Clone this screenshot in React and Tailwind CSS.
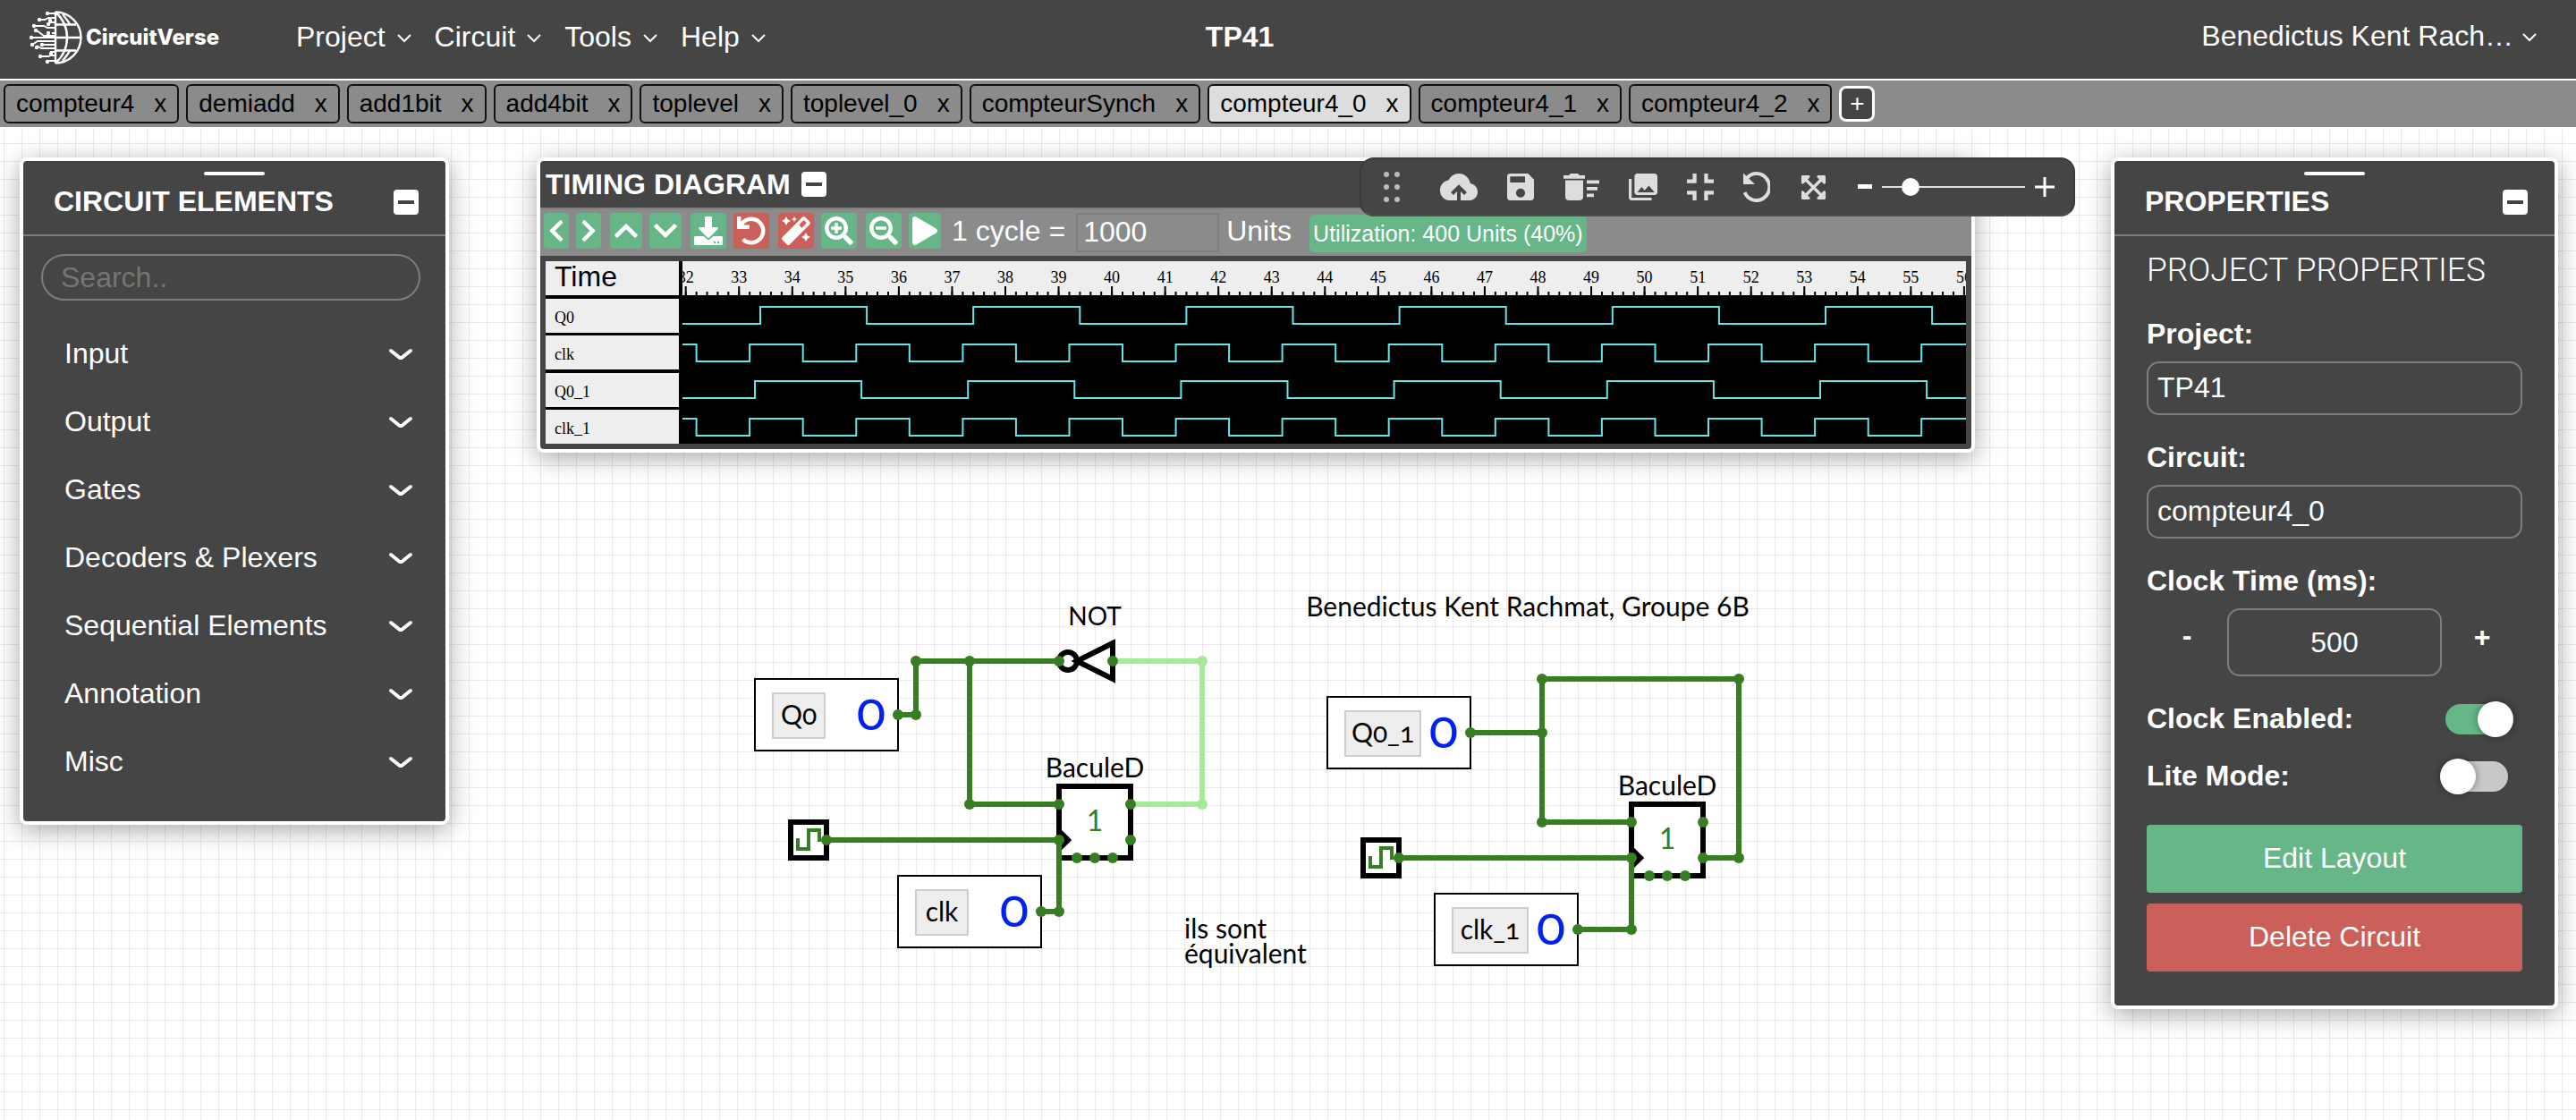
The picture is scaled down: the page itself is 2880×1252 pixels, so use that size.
import React from "react";
import {
  FaChevronDown,
  FaChevronLeft,
  FaChevronRight,
  FaChevronUp,
  FaDownload,
  FaExpandArrowsAlt,
  FaMagic,
  FaPlay,
  FaSearchMinus,
  FaSearchPlus,
  FaUndo,
} from "react-icons/fa";

const WIRE = "#377e22";
const WIRE_HIGH = "#a5ea99";

function NavChevron() {
  return (
    <svg width="16" height="10" viewBox="0 0 16 10" fill="none" stroke="currentColor" strokeWidth="2" aria-hidden="true" className="mt-1">
      <path d="M1 1l7 7 7-7" />
    </svg>
  );
}

function Logo() {
  const node = (x, y) => <circle key={x + "-" + y} cx={x} cy={y} r="2.2" fill="#fff" stroke="none" />;
  return (
    <svg width="60" height="60" viewBox="0 0 60 60" fill="none" stroke="#fff" strokeWidth="2.4" aria-hidden="true">
      <path d="M30 1v58M30 1.5a28.5 28.5 0 010 57M30 1.5c9 8 13 18 13 28.500s-4 20.500-13 28.500M30 15.500h23M30 30h28M30 44.500h23M38 4c4 5 7 9 8 11M38 56c4-5 7-9 8-11.500" />
      <path
        strokeWidth="1.8"
        d="M30 3h-8M30 8h-8l-4 2h-6M30 13h-5l-3 2M30 19h-9l-4-2H6M30 25h-4M30 28H17L9 22M30 30H3M30 34H14l-4 0-6 4M30 38H15M30 42H14l-5-3M30 46h-6M30 50h-5l-3 1h-8M30 56h-8"
      />
      {[[21, 3], [12, 10], [24, 11], [6, 17], [22, 15], [8, 22], [22, 25], [3, 30], [4, 38], [15, 38], [9, 41], [25, 48], [13, 51], [21, 57]].map(([x, y]) => node(x, y))}
    </svg>
  );
}

function MenuItem({ children }) {
  return (
    <button type="button" className="flex items-center gap-[13px]">
      {children}
      <NavChevron />
    </button>
  );
}

function Header() {
  return (
    <header className="grid h-[90px] grid-cols-[46.8%_auto_1fr] items-center border-b-2 border-white bg-[#454545] pb-1.5 text-[32px] leading-9 text-white">
      <div className="flex items-center">
        <a href="#home" className="flex w-[331px] items-center gap-1 pt-0.5 pl-8">
          <Logo />
          <span className="font-[Inter,sans-serif] text-[24px] font-extrabold">CircuitVerse</span>
        </a>
        <nav className="flex gap-[26px]">
          <MenuItem>Project</MenuItem>
          <MenuItem>Circuit</MenuItem>
          <MenuItem>Tools</MenuItem>
          <MenuItem>Help</MenuItem>
        </nav>
      </div>
      <h1 className="font-bold">TP41</h1>
      <div className="flex justify-end pr-11 pb-0.5">
        <button type="button" className="flex items-center gap-2.5">
          Benedictus Kent Rach…
          <NavChevron />
        </button>
      </div>
    </header>
  );
}

const TABS = ["compteur4", "demiadd", "add1bit", "add4bit", "toplevel", "toplevel_0", "compteurSynch", "compteur4_0", "compteur4_1", "compteur4_2"];

function TabBar() {
  return (
    <div className="flex h-[52px] items-center gap-2 bg-[#8b8b8b] px-1 text-[28px] leading-8 text-black">
      {TABS.map((name) => (
        <div
          key={name}
          className={
            "flex h-11 items-center gap-[22px] rounded-md border-2 border-[#111] px-3 " + (name === "compteur4_0" ? "bg-[#dddddd]" : "")
          }
        >
          <button type="button">{name}</button>
          <button type="button" aria-label={"Close " + name}>x</button>
        </div>
      ))}
      <button type="button" aria-label="New circuit" className="flex h-10 w-10 items-center justify-center rounded-lg border-[3px] border-white bg-[#454545] text-white">
        +
      </button>
    </div>
  );
}

function MinusBox() {
  return (
    <button type="button" aria-label="Minimize" className="flex h-7 w-7 items-center justify-center rounded bg-white">
      <span className="h-1 w-[18px] bg-[#454545]" />
    </button>
  );
}

function Panel({ title, className, children }) {
  return (
    <section className={"shrink-0 rounded-lg border-4 border-white bg-[#454545] text-white shadow-[0_6px_28px_rgba(0,0,0,0.35)] " + className}>
      <div className="border-b-2 border-[#7d7d7d] pt-3 pb-1.5">
        <div className="mx-auto h-1 w-[68px] rounded-sm bg-white" />
        <div className="flex h-[60px] items-center justify-between pr-[30px] pl-[34px]">
          <h2 className="pb-0.5 text-[32px] font-bold">{title}</h2>
          <MinusBox />
        </div>
      </div>
      {children}
    </section>
  );
}

const CATEGORIES = ["Input", "Output", "Gates", "Decoders & Plexers", "Sequential Elements", "Annotation", "Misc"];

function CircuitElements() {
  return (
    <Panel title="CIRCUIT ELEMENTS" className="w-[480px]">
      <div className="pt-5 pr-7 pb-[22px] pl-5">
        <input
          type="text"
          aria-label="Search"
          placeholder="Search.."
          className="h-[52px] w-full rounded-full border-2 border-[#7d7d7d] bg-transparent px-5 text-[32px] placeholder:text-[#757575]"
        />
      </div>
      <div className="pb-7">
        {CATEGORIES.map((name) => (
          <button key={name} type="button" className="flex h-[76px] w-full items-center justify-between pr-9 pl-[46px] text-[32px]">
            <span className="pb-0.5">{name}</span>
            <svg width="28" height="14" viewBox="0 0 28 14" fill="none" stroke="#fff" strokeWidth="4" strokeLinecap="round" aria-hidden="true">
              <path d="M3 3l10 8M25 3l-10 8" />
            </svg>
          </button>
        ))}
      </div>
    </Panel>
  );
}

function Switch({ id, defaultChecked }) {
  return (
    <input
      id={id}
      type="checkbox"
      role="switch"
      defaultChecked={defaultChecked}
      className="relative mr-4 h-[34px] w-[70px] appearance-none rounded-full bg-[#c8c8c8] before:absolute before:-top-[3px] before:-left-1.5 before:h-10 before:w-10 before:rounded-full before:bg-white before:shadow-[0_0_8px_rgba(0,0,0,0.4)] checked:bg-[#66b688] checked:before:left-9"
    />
  );
}

function Properties() {
  const label = "flex h-[62px] items-center text-[32px] font-bold";
  const field = "h-[60px] w-full rounded-[14px] border-2 border-[#7d7d7d] bg-transparent px-2.5 pb-0.5 text-[32px]";
  return (
    <Panel title="PROPERTIES" className="w-[500px]">
      <div className="flex flex-col px-9 pt-2 pb-[38px]">
        <h3 className="mb-2.5 flex h-[60px] items-center font-[Roboto,sans-serif] text-[37px] font-light">PROJECT PROPERTIES</h3>
        <label htmlFor="project" className={label}>Project:</label>
        <input id="project" type="text" defaultValue="TP41" className={field} />
        <label htmlFor="circuit" className={label + " mt-4"}>Circuit:</label>
        <input id="circuit" type="text" defaultValue="compteur4_0" className={field} />
        <label htmlFor="clock" className={label + " mt-4"}>Clock Time (ms):</label>
        <div className="flex h-[76px] items-stretch">
          <button type="button" aria-label="Decrease" className="flex-1 pb-4 text-[32px] font-bold">-</button>
          <input id="clock" type="text" defaultValue="500" className="w-60 rounded-[14px] border-2 border-[#7d7d7d] bg-transparent text-center text-[32px]" />
          <button type="button" aria-label="Increase" className="flex-1 pb-3 text-[32px] font-bold">+</button>
        </div>
        <div className="mt-4 flex h-16 items-center justify-between">
          <label htmlFor="enabled" className="pb-0.5 text-[32px] font-bold">Clock Enabled:</label>
          <Switch id="enabled" defaultChecked />
        </div>
        <div className="flex h-16 items-center justify-between">
          <label htmlFor="lite" className="pb-0.5 text-[32px] font-bold">Lite Mode:</label>
          <Switch id="lite" />
        </div>
        <button type="button" className="mt-[22px] h-[76px] rounded bg-[#66b688] pb-0.5 text-[32px]">Edit Layout</button>
        <button type="button" className="mt-3 h-[76px] rounded bg-[#cb5f5a] pb-0.5 text-[32px]">Delete Circuit</button>
      </div>
    </Panel>
  );
}

const PITCH = 59.55;
const FIRST_TICK = 3.7;
const SIGNALS = [
  { name: "Q0", low: 70, first: 87, half: 2 * PITCH, startHigh: false },
  { name: "clk", low: 112, first: 15.6, half: PITCH, startHigh: true },
  { name: "Q0_1", low: 153, first: 81, half: 2 * PITCH, startHigh: false },
  { name: "clk_1", low: 195, first: 15.6, half: PITCH, startHigh: true },
];

function wavePath({ low, first, half, startHigh }) {
  let high = startHigh;
  let d = "M0 " + (high ? low - 19 : low);
  for (let x = first; x < 1500; x += half) {
    high = !high;
    d += "H" + x.toFixed(1) + "V" + (high ? low - 19 : low);
  }
  return d + "H1500";
}

function TimingPlot() {
  const ticks = Array.from({ length: 25 }, (_, i) => i);
  const minor = Array.from({ length: 122 }, (_, i) => i);
  return (
    <svg height="204" className="min-w-0 flex-1 bg-black" role="img" aria-label="Timing diagram">
      <rect width="100%" height="38" fill="#eee" />
      {minor.map((i) => (
        <rect key={i} x={FIRST_TICK - 1 + (i * PITCH) / 5} y="34" width="2" height="4" fill="#000" />
      ))}
      {ticks.map((i) => (
        <g key={i}>
          <rect x={FIRST_TICK - 1 + i * PITCH} y="28" width="2" height="10" fill="#000" />
          <text x={FIRST_TICK + i * PITCH} y="24" textAnchor="middle" className="font-['Liberation_Serif',serif] text-[18px]">
            {32 + i}
          </text>
        </g>
      ))}
      {SIGNALS.map((s) => (
        <path key={s.name} d={wavePath(s)} fill="none" stroke="#64e6e8" strokeWidth="2" />
      ))}
    </svg>
  );
}

function ToolButton({ label, tone, width, children }) {
  return (
    <button
      type="button"
      aria-label={label}
      className={"flex h-10 items-center justify-center rounded-sm text-[32px] text-white " + width + " " + (tone === "red" ? "bg-[#cb5f5a]" : "bg-[#66b688]")}
    >
      {children}
    </button>
  );
}

function TimingDiagram() {
  return (
    <section className="ml-[98px] flex min-w-0 flex-1 flex-col self-start overflow-hidden rounded-lg border-4 border-white bg-[#454545] text-white shadow-[0_6px_28px_rgba(0,0,0,0.35)]">
      <div className="flex h-[52px] items-center gap-3 pl-1.5 text-[32px]">
        <h2 className="font-bold">TIMING DIAGRAM</h2>
        <MinusBox />
      </div>
      <div className="flex h-[54px] items-start border-t-2 border-[#7f7f7f] bg-[#8b8b8b] pt-1 pl-1 text-[32px] whitespace-nowrap">
        <div className="flex gap-2.5">
          <div className="flex gap-2">
            <ToolButton label="Earlier" width="w-7"><FaChevronLeft size="28" /></ToolButton>
            <ToolButton label="Later" width="w-7"><FaChevronRight size="28" /></ToolButton>
          </div>
          <div className="flex gap-2">
            <ToolButton label="Smaller" width="w-9"><FaChevronUp size="30" /></ToolButton>
            <ToolButton label="Larger" width="w-9"><FaChevronDown size="30" /></ToolButton>
          </div>
          <div className="flex gap-2">
            <ToolButton label="Download" width="w-10"><FaDownload /></ToolButton>
            <ToolButton label="Reset" tone="red" width="w-10"><FaUndo /></ToolButton>
          </div>
          <div className="flex gap-2">
            <ToolButton label="Autocalibrate" tone="red" width="w-10"><FaMagic /></ToolButton>
            <ToolButton label="Zoom in" width="w-10"><FaSearchPlus /></ToolButton>
          </div>
          <div className="flex gap-2">
            <ToolButton label="Zoom out" width="w-10"><FaSearchMinus /></ToolButton>
            <ToolButton label="Resume" width="w-9"><FaPlay /></ToolButton>
          </div>
        </div>
        <label htmlFor="cycle" className="ml-3 leading-10">1 cycle =</label>
        <input id="cycle" type="text" defaultValue="1000" className="mr-2 ml-3 h-11 w-40 border-2 border-[#7d7d7d] bg-transparent px-1.5 pb-0.5 font-medium" />
        <span className="leading-10">Units</span>
        <span className="mt-0.5 ml-5 h-[42px] rounded-md bg-[#66b688] px-1 text-[25px] leading-[42px]">Utilization: 400 Units (40%)</span>
      </div>
      <div className="p-1.5">
        <div className="flex bg-black">
          <div className="mr-1 flex w-[149px] flex-col justify-between text-black">
            <div className="h-[38px] bg-[#eee] pl-2.5 text-[32px] leading-[34px]">Time</div>
            {SIGNALS.map((s) => (
              <div key={s.name} className="h-[38px] bg-[#eee] pl-2.5 font-['Liberation_Serif',serif] text-[18px] leading-[42px]">
                {s.name}
              </div>
            ))}
          </div>
          <TimingPlot />
        </div>
      </div>
    </section>
  );
}

function QuickButtons() {
  return (
    <div className="absolute top-[34px] right-[560px] flex h-[66px] items-center rounded-2xl border-2 border-[#3a3a3a] border-b-[#4e4e4e] bg-[#454545] pr-[21px] pl-[25px] text-[#dddddd]">
      <svg width="18" height="34" viewBox="0 0 18 34" fill="#bbb" className="mr-[45px]" aria-hidden="true">
        {[3, 17, 31].map((y) => (
          <g key={y}>
            <circle cx="3" cy={y} r="3" />
            <circle cx="15" cy={y} r="3" />
          </g>
        ))}
      </svg>
      <div className="flex items-center gap-[33px]">
        <button type="button" aria-label="Save online">
          <svg width="42" height="30" viewBox="0 0 42 30" fill="currentColor">
            <path d="M33.900 11.300C32.700 4.800 27.400 0 21 0 15.900 0 11.600 3 9.400 7.500 4.100 8.100 0 12.900 0 18.700 0 24.900 4.700 30 10.500 30h22.700c4.900 0 8.800-4.200 8.800-9.400 0-4.900-3.600-9-8.100-9.300z" />
            <path d="M21 30V16M13.500 22.500l7.500-7.500 7.500 7.500" fill="none" stroke="#454545" strokeWidth="4" />
          </svg>
        </button>
        <button type="button" aria-label="Save offline">
          <svg width="30" height="30" viewBox="3 3 18 18" fill="currentColor">
            <path d="M17 3H5c-1.110 0-2 .9-2 2v14c0 1.100.89 2 2 2h14c1.100 0 2-.9 2-2V7l-4-4zm-5 16c-1.660 0-3-1.340-3-3s1.340-3 3-3 3 1.340 3 3-1.340 3-3 3zm3-10H5V5h10v4z" />
          </svg>
        </button>
        <button type="button" aria-label="Delete selected">
          <svg width="40" height="30" viewBox="2 4 20 16" preserveAspectRatio="none" fill="currentColor">
            <path d="M15 16h4v2h-4zM15 8h7v2h-7zM15 12h6v2h-6zM3 18c0 1.100.9 2 2 2h6c1.100 0 2-.9 2-2V8H3v10zM14 5h-3l-1-1H6L5 5H2v2h12z" />
          </svg>
        </button>
        <button type="button" aria-label="Download as image">
          <svg width="32" height="30" viewBox="2 2 20 20" preserveAspectRatio="none" fill="currentColor">
            <path d="M22 16V4c0-1.100-.9-2-2-2H8c-1.100 0-2 .9-2 2v12c0 1.100.9 2 2 2h12c1.100 0 2-.9 2-2zm-11-4l2.030 2.710L16 11l4 5H8l3-4zM2 6v14c0 1.100.9 2 2 2h14v-2H4V6H2z" />
          </svg>
        </button>
        <button type="button" aria-label="Fit to screen">
          <svg width="30" height="30" viewBox="5 5 14 14" fill="currentColor">
            <path d="M5 16h3v3h2v-5H5v2zm3-8H5v2h5V5H8v3zm6 11h2v-3h3v-2h-5v5zm2-11V5h-2v5h5V8h-3z" />
          </svg>
        </button>
        <button type="button" aria-label="Undo">
          <svg width="30" height="34" viewBox="0 0 30 34" fill="none">
            <path d="M4 7a14.500 15 0 1 1-2.500 16" stroke="currentColor" strokeWidth="4" />
            <path d="M0 1.500L13 14H0z" fill="currentColor" />
          </svg>
        </button>
        <button type="button" aria-label="View" className="text-[31px]">
          <FaExpandArrowsAlt />
        </button>
      </div>
      <div className="ml-[34px] flex items-center gap-[11px]">
        <button type="button" aria-label="Zoom out">
          <svg width="16" height="22" viewBox="0 0 16 22" fill="#fff"><path d="M0 8h16v5H0z" /></svg>
        </button>
        <input
          type="range"
          aria-label="Zoom"
          min="0"
          max="100"
          defaultValue="16"
          className="h-5 w-40 appearance-none bg-[linear-gradient(#ddd,#ddd)] bg-[length:100%_2px] bg-center bg-no-repeat [&::-webkit-slider-thumb]:h-5 [&::-webkit-slider-thumb]:w-5 [&::-webkit-slider-thumb]:appearance-none [&::-webkit-slider-thumb]:rounded-full [&::-webkit-slider-thumb]:bg-white"
        />
        <button type="button" aria-label="Zoom in">
          <svg width="22" height="22" viewBox="0 0 22 22" stroke="#fff" strokeWidth="3"><path d="M0 11h22M11 0v22" /></svg>
        </button>
      </div>
    </div>
  );
}

function Wire({ d, high }) {
  return <path d={d} fill="none" stroke={high ? WIRE_HIGH : WIRE} strokeWidth="6" />;
}

function Nodes({ points, high }) {
  return points.map(([x, y]) => <circle key={x + "," + y} cx={x} cy={y} r="6" fill={high ? WIRE_HIGH : WIRE} />);
}

function InputPin({ x, y, label, labelWidth }) {
  return (
    <g>
      <rect x={x} y={y} width="160" height="80" fill="#fff" stroke="#000" strokeWidth="2" />
      <rect x={x + 20} y={y + 16} width={labelWidth} height="50" fill="#eee" stroke="#ccc" strokeWidth="2" />
      <text x={x + 20 + labelWidth / 2} y={y + 51} textAnchor="middle" fontSize="30" className="oldstyle-nums">{label}</text>
      <text x={x + 130} y={y + 57} textAnchor="middle" fontSize="60" fill="#0021f5" className="oldstyle-nums">0</text>
    </g>
  );
}

function ClockPin({ x, y }) {
  return (
    <g fill="none">
      <rect x={x - 20} y={y - 20} width="40" height="40" fill="#fff" stroke="#000" strokeWidth="6" />
      <path d={`M${x - 12} ${y - 2}V${y + 10}H${x}V${y - 11}H${x + 12}V${y + 2}`} stroke={WIRE} strokeWidth="4" />
    </g>
  );
}

function FlipFlop({ x, y }) {
  return (
    <g>
      <rect x={x} y={y} width="80" height="80" fill="#fff" stroke="#000" strokeWidth="6" />
      <path d={`M${x} ${y + 50}l10 10l-10 10`} fill="none" stroke="#000" strokeWidth="6" />
      <text x={x + 40} y={y + 50} textAnchor="middle" fontSize="32" fill={WIRE}>1</text>
      <text x={x + 40} y={y - 10} textAnchor="middle" fontSize="30">BaculeD</text>
    </g>
  );
}

function CircuitCanvas() {
  return (
    <svg className="absolute inset-0 h-full w-full" role="img" aria-label="Circuit">
      <defs>
        <pattern id="grid" x="4" y="18" width="20" height="20" patternUnits="userSpaceOnUse">
          <path d="M0 0h20v1H1v19H0z" fill="#eaeaea" />
        </pattern>
      </defs>
      <rect y="2" width="100%" height="100%" fill="url(#grid)" />
      <g transform="translate(0 -142)" className="font-[Lato,sans-serif]">
        <InputPin x={844} y={759} label="Q0" labelWidth={58} />
        <InputPin x={1004} y={979} label="clk" labelWidth={58} />
        <ClockPin x={904} y={939} />
        <FlipFlop x={1184} y={879} />
        <circle cx="1194" cy="739" r="10" fill="#fff" stroke="#000" strokeWidth="6" />
        <path d="M1244 719L1204 739L1244 759Z" fill="#fff" stroke="#000" strokeWidth="6" />
        <text x="1224" y="699" textAnchor="middle" fontSize="28">NOT</text>
        <Wire d="M1004 799H1024V739H1184M1084 739V899H1184M924 939H1184V1019H1164" />
        <Wire high d="M1244 739H1344V899H1264" />
        <Nodes high points={[[1344, 739], [1344, 899]]} />
        <Nodes
          points={[
            [1004, 799], [1024, 799], [1024, 739], [1084, 739], [1184, 739], [1244, 739], [1084, 899], [1184, 899], [1264, 899], [1264, 939],
            [924, 939], [1184, 939], [1184, 1019], [1164, 1019], [1204, 959], [1224, 959], [1244, 959],
          ]}
        />
        <text x="1324" y="1049" fontSize="30">ils sont</text>
        <text x="1324" y="1077" fontSize="30">équivalent</text>

        <text x="1708" y="689" textAnchor="middle" fontSize="30">Benedictus Kent Rachmat, Groupe 6B</text>
        <InputPin x={1484} y={779} label="Q0_1" labelWidth={84} />
        <InputPin x={1604} y={999} label="clk_1" labelWidth={84} />
        <ClockPin x={1544} y={959} />
        <FlipFlop x={1824} y={899} />
        <Wire d="M1644 819H1724M1904 959H1944V759H1724V919H1824M1564 959H1824V1039H1764" />
        <Nodes
          points={[
            [1644, 819], [1724, 819], [1724, 759], [1944, 759], [1944, 959], [1904, 959], [1904, 919], [1724, 919], [1824, 919],
            [1564, 959], [1824, 959], [1824, 1039], [1764, 1039], [1844, 979], [1864, 979], [1884, 979],
          ]}
        />
      </g>
    </svg>
  );
}

export default function App() {
  return (
    <div className="flex min-h-screen flex-col bg-white font-['Liberation_Sans',Arial,sans-serif]">
      <Header />
      <TabBar />
      <main className="relative flex-1 overflow-hidden">
        <CircuitCanvas />
        <div className="relative flex items-start pt-[34px] pr-5 pb-10 pl-[22px]">
          <CircuitElements />
          <div className="mr-[152px] flex min-w-0 flex-1 self-start">
            <TimingDiagram />
          </div>
          <Properties />
        </div>
        <QuickButtons />
      </main>
    </div>
  );
}
